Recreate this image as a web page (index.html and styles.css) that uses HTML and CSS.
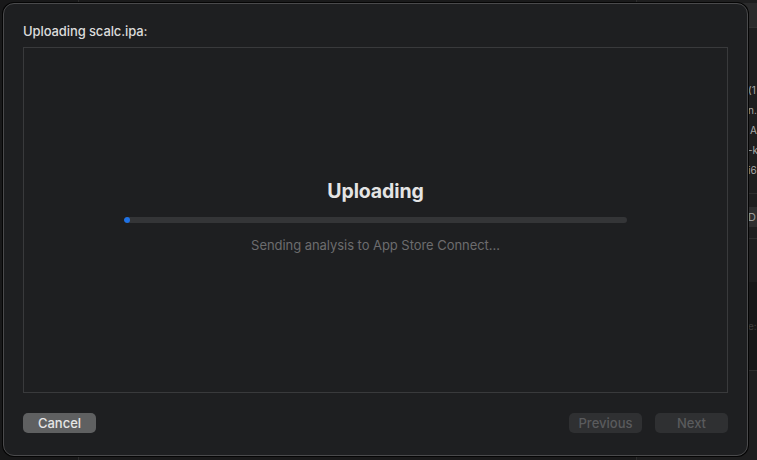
FILE: index.html
```html
<!DOCTYPE html>
<html>
<head>
<meta charset="utf-8">
<link rel="stylesheet" href="styles.css">
</head>
<body>
<div class="desktop">
  <div class="bg-col bg-left"></div>
  <div class="bg-col bg-mid"></div>
  <div class="bg-col bg-right">
    <div class="bg-tab"><span>da</span></div>
    <div class="bg-lines">
      <span class="l1">(1</span>
      <span class="l2">n.</span>
      <span class="l3">A</span>
      <span class="l4">-k</span>
      <span class="l5">i6</span>
    </div>
    <div class="bg-sep s1"></div>
    <div class="bg-btn">D</div>
    <div class="bg-sep s2"></div>
    <div class="bg-dark"><span>e:</span></div>
    <div class="bg-sep s3"></div>
  </div>

  <div class="sheet">
    <div class="sheet-title">Uploading scalc.ipa:</div>
    <div class="panel">
      <div class="status">
        <div class="status-heading">Uploading</div>
        <div class="progress"><div class="progress-fill"></div></div>
        <div class="status-detail">Sending analysis to App Store Connect...</div>
      </div>
    </div>
    <div class="footer">
      <button class="btn btn-active">Cancel</button>
      <div class="footer-right">
        <button class="btn btn-disabled">Previous</button>
        <button class="btn btn-disabled">Next</button>
      </div>
    </div>
  </div>
</div>
</body>
</html>
```
FILE: styles.css
```css
* { box-sizing: border-box; }
html, body {
  margin: 0;
  padding: 0;
  width: 757px;
  height: 460px;
  overflow: hidden;
  background: #161617;
  font-family: Inter, "Noto Sans", "Liberation Sans", sans-serif;
}
.desktop {
  position: relative;
  width: 757px;
  height: 460px;
  display: flex;
}
.bg-col {
  height: 460px;
}
.bg-left {
  width: 79px;
  border-right: 1px solid #2c2c2c;
  background: #181819;
}
.bg-mid {
  width: 558px;
  border-right: 1px solid #2c2c2c;
  background: #1a1a1b;
}
.bg-right {
  flex: 1;
  background: #1e1e1f;
  position: relative;
  overflow: hidden;
}
.bg-tab {
  position: absolute;
  left: 40px;
  right: 0;
  top: 3px;
  height: 25px;
  background: #2b2b2c;
  border-bottom: 1px solid #333;
}
.bg-tab span {
  position: absolute;
  left: 110px;
  top: 0;
  color: #9a9a9a;
  font-size: 10px;
  line-height: 25px;
}
.bg-lines span {
  position: absolute;
  left: 111px;
  color: #a8a8a8;
  font-size: 10px;
  white-space: nowrap;
}
.bg-lines .l1 { top: 84px; }
.bg-lines .l2 { top: 104px; }
.bg-lines .l3 { top: 124px; left: 113px; }
.bg-lines .l4 { top: 144px; }
.bg-lines .l5 { top: 164px; }
.bg-sep {
  position: absolute;
  left: 0;
  right: 0;
  height: 1px;
  background: #2e2e2e;
}
.bg-sep.s1 { top: 193px; }
.bg-sep.s2 { top: 238px; }
.bg-sep.s3 { top: 370px; }
.bg-btn {
  position: absolute;
  left: 108px;
  right: 0;
  top: 207px;
  height: 20px;
  padding-left: 3px;
  background: #2e2e2f;
  color: #9a9a9a;
  font-size: 11px;
  line-height: 20px;
}
.bg-dark {
  position: absolute;
  left: 0;
  right: 0;
  top: 282px;
  height: 88px;
  background: #171718;
}
.bg-dark span {
  position: absolute;
  left: 111px;
  top: 38px;
  color: #3c3c3c;
  font-size: 10px;
}

.sheet {
  position: absolute;
  left: 3px;
  top: 3px;
  width: 745px;
  height: 453px;
  background: #1e1f21;
  border: 1px solid #4a4a4c;
  border-radius: 11px;
  box-shadow: 0 0 0 1px #050505;
  padding: 19px 19px 0 19px;
  display: flex;
  flex-direction: column;
}
.sheet-title {
  color: #dcdcdc;
  font-size: 13px;
  font-weight: 500;
  line-height: 16px;
  height: 24px;
  letter-spacing: -0.1px;
}
.panel {
  width: 705px;
  height: 346px;
  border: 1px solid #393a3c;
  display: flex;
  align-items: center;
  justify-content: center;
  padding-bottom: 8px;
}
.status {
  display: flex;
  flex-direction: column;
  align-items: center;
}
.status-heading {
  color: #e4e4e4;
  font-size: 19.5px;
  font-weight: 700;
  line-height: 24px;
  margin-bottom: 14px;
  letter-spacing: -0.1px;
}
.progress {
  width: 503px;
  height: 6px;
  border-radius: 3px;
  background: #343537;
  overflow: hidden;
}
.progress-fill {
  width: 6px;
  height: 6px;
  border-radius: 3px;
  background: #1e72e6;
}
.status-detail {
  margin-top: 14px;
  color: #6c6c6e;
  font-size: 13px;
  line-height: 16px;
  letter-spacing: -0.05px;
}
.footer {
  margin-top: 20px;
  display: flex;
  justify-content: space-between;
}
.footer-right {
  display: flex;
  gap: 13px;
}
.btn {
  width: 73px;
  height: 20px;
  border: none;
  border-radius: 5px;
  font-family: inherit;
  font-size: 13px;
  line-height: 20px;
  padding: 0;
  text-align: center;
}
.btn-active {
  background: #5f6061;
  color: #e6e6e6;
  font-weight: 500;
}
.btn-disabled {
  background: #2f3032;
  color: #5a5b5d;
  font-weight: 500;
}
```
